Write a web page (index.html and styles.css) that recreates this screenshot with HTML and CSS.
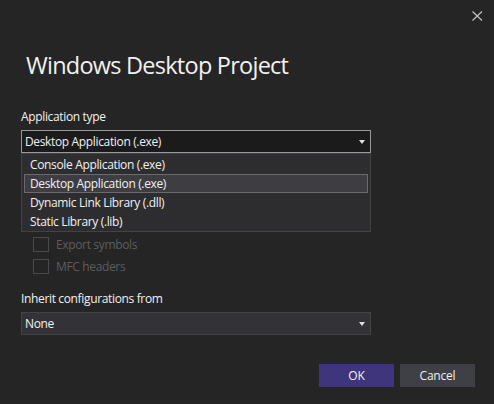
FILE: index.html
```html
<!DOCTYPE html>
<html lang="en">
<head>
<meta charset="utf-8">
<title>Windows Desktop Project</title>
<link rel="stylesheet" href="styles.css">
</head>
<body>
<div class="dialog">
  <button class="close" aria-label="Close">
    <svg width="11" height="10" viewBox="0 0 11 10"><path d="M0.5 0.5 L10 9.5 M10 0.5 L0.5 9.5" stroke="#c8c8c8" stroke-width="1.1" fill="none"/></svg>
  </button>
  <h1 class="title">Windows Desktop Project</h1>

  <div class="field-label">Application type</div>
  <div class="combo-wrap">
    <div class="combo combo-open">
      <span class="combo-text">Desktop Application (.exe)</span>
      <span class="arrow"></span>
    </div>
    <ul class="list">
      <li class="item">Console Application (.exe)</li>
      <li class="item item-selected">Desktop Application (.exe)</li>
      <li class="item">Dynamic Link Library (.dll)</li>
      <li class="item">Static Library (.lib)</li>
    </ul>
  </div>

  <div class="options">
    <label class="check"><span class="box"></span><span class="check-text">Export symbols</span></label>
    <label class="check"><span class="box"></span><span class="check-text">MFC headers</span></label>
  </div>

  <div class="field-label field-label-2">Inherit configurations from</div>
  <div class="combo combo-closed">
    <span class="combo-text">None</span>
    <span class="arrow"></span>
  </div>

  <div class="buttons">
    <button class="btn btn-primary">OK</button>
    <button class="btn">Cancel</button>
  </div>
</div>
</body>
</html>
```
FILE: styles.css
```css
* { box-sizing: border-box; }
html, body { margin: 0; padding: 0; }
body {
  background: #252526;
  font-family: "Open Sans", "Noto Sans", sans-serif;
  color: #f1f1f1;
  letter-spacing: -0.35px;
}
.dialog {
  position: relative;
  width: 494px;
  height: 404px;
  padding: 49px 19px 0 21px;
  display: flex;
  flex-direction: column;
}
.close {
  position: absolute;
  top: 10px;
  right: 10px;
  width: 13px;
  height: 12px;
  padding: 1px;
  border: 0;
  background: transparent;
  display: flex;
  align-items: center;
  justify-content: center;
}
.title {
  margin: 0 0 0 5px;
  font-size: 23.5px;
  line-height: 32px;
  font-weight: 400;
  color: #f1f1f1;
  letter-spacing: -0.75px;
}
.field-label {
  margin-top: 28px;
  font-size: 12px;
  line-height: 16px;
  color: #f1f1f1;
}
.field-label-2 { margin-top: 14px; }
.combo-wrap {
  position: relative;
  margin-top: 5px;
  width: 350px;
}
.combo {
  width: 350px;
  height: 23px;
  border: 1px solid #999999;
  background: #1b1b1c;
  display: flex;
  align-items: center;
  justify-content: space-between;
  padding: 0 3px 0 3px;
  font-size: 12px;
  color: #f1f1f1;
}
.combo-closed {
  margin-top: 5px;
  border-color: #434346;
  background: #333337;
}
.arrow {
  width: 0;
  height: 0;
  border-left: 3.5px solid transparent;
  border-right: 3.5px solid transparent;
  border-top: 4px solid #e0e0e0;
  margin-right: 2px;
  margin-top: 1px;
}
.list {
  position: absolute;
  top: 23px;
  left: 0;
  width: 350px;
  margin: 0;
  padding: 1px 2px 0 2px;
  list-style: none;
  background: #2d2d30;
  border: 1px solid #434346;
}
.item {
  height: 19px;
  line-height: 17px;
  padding: 0 0 0 5px;
  border: 1px solid transparent;
  font-size: 12px;
  color: #f1f1f1;
}
.item-selected {
  background: #3e3e42;
  border-color: #6a6a6f;
}
.options {
  margin-top: 80px;
  padding-left: 12px;
  display: flex;
  flex-direction: column;
}
.check {
  height: 22px;
  display: flex;
  align-items: center;
  gap: 7px;
}
.box {
  width: 16px;
  height: 15px;
  border: 1px solid #4a4a4d;
}
.check-text {
  font-size: 12px;
  color: #5c5c5f;
}
.buttons {
  margin-top: 29px;
  display: flex;
  justify-content: flex-end;
  gap: 6px;
}
.btn {
  width: 75px;
  height: 23px;
  border: 0;
  background: #3f3f46;
  color: #f1f1f1;
  font-family: "Open Sans", "Noto Sans", sans-serif;
  font-size: 12px;
  letter-spacing: -0.2px;
  padding: 0;
}
.btn-primary { background: #3f357c; }
```
